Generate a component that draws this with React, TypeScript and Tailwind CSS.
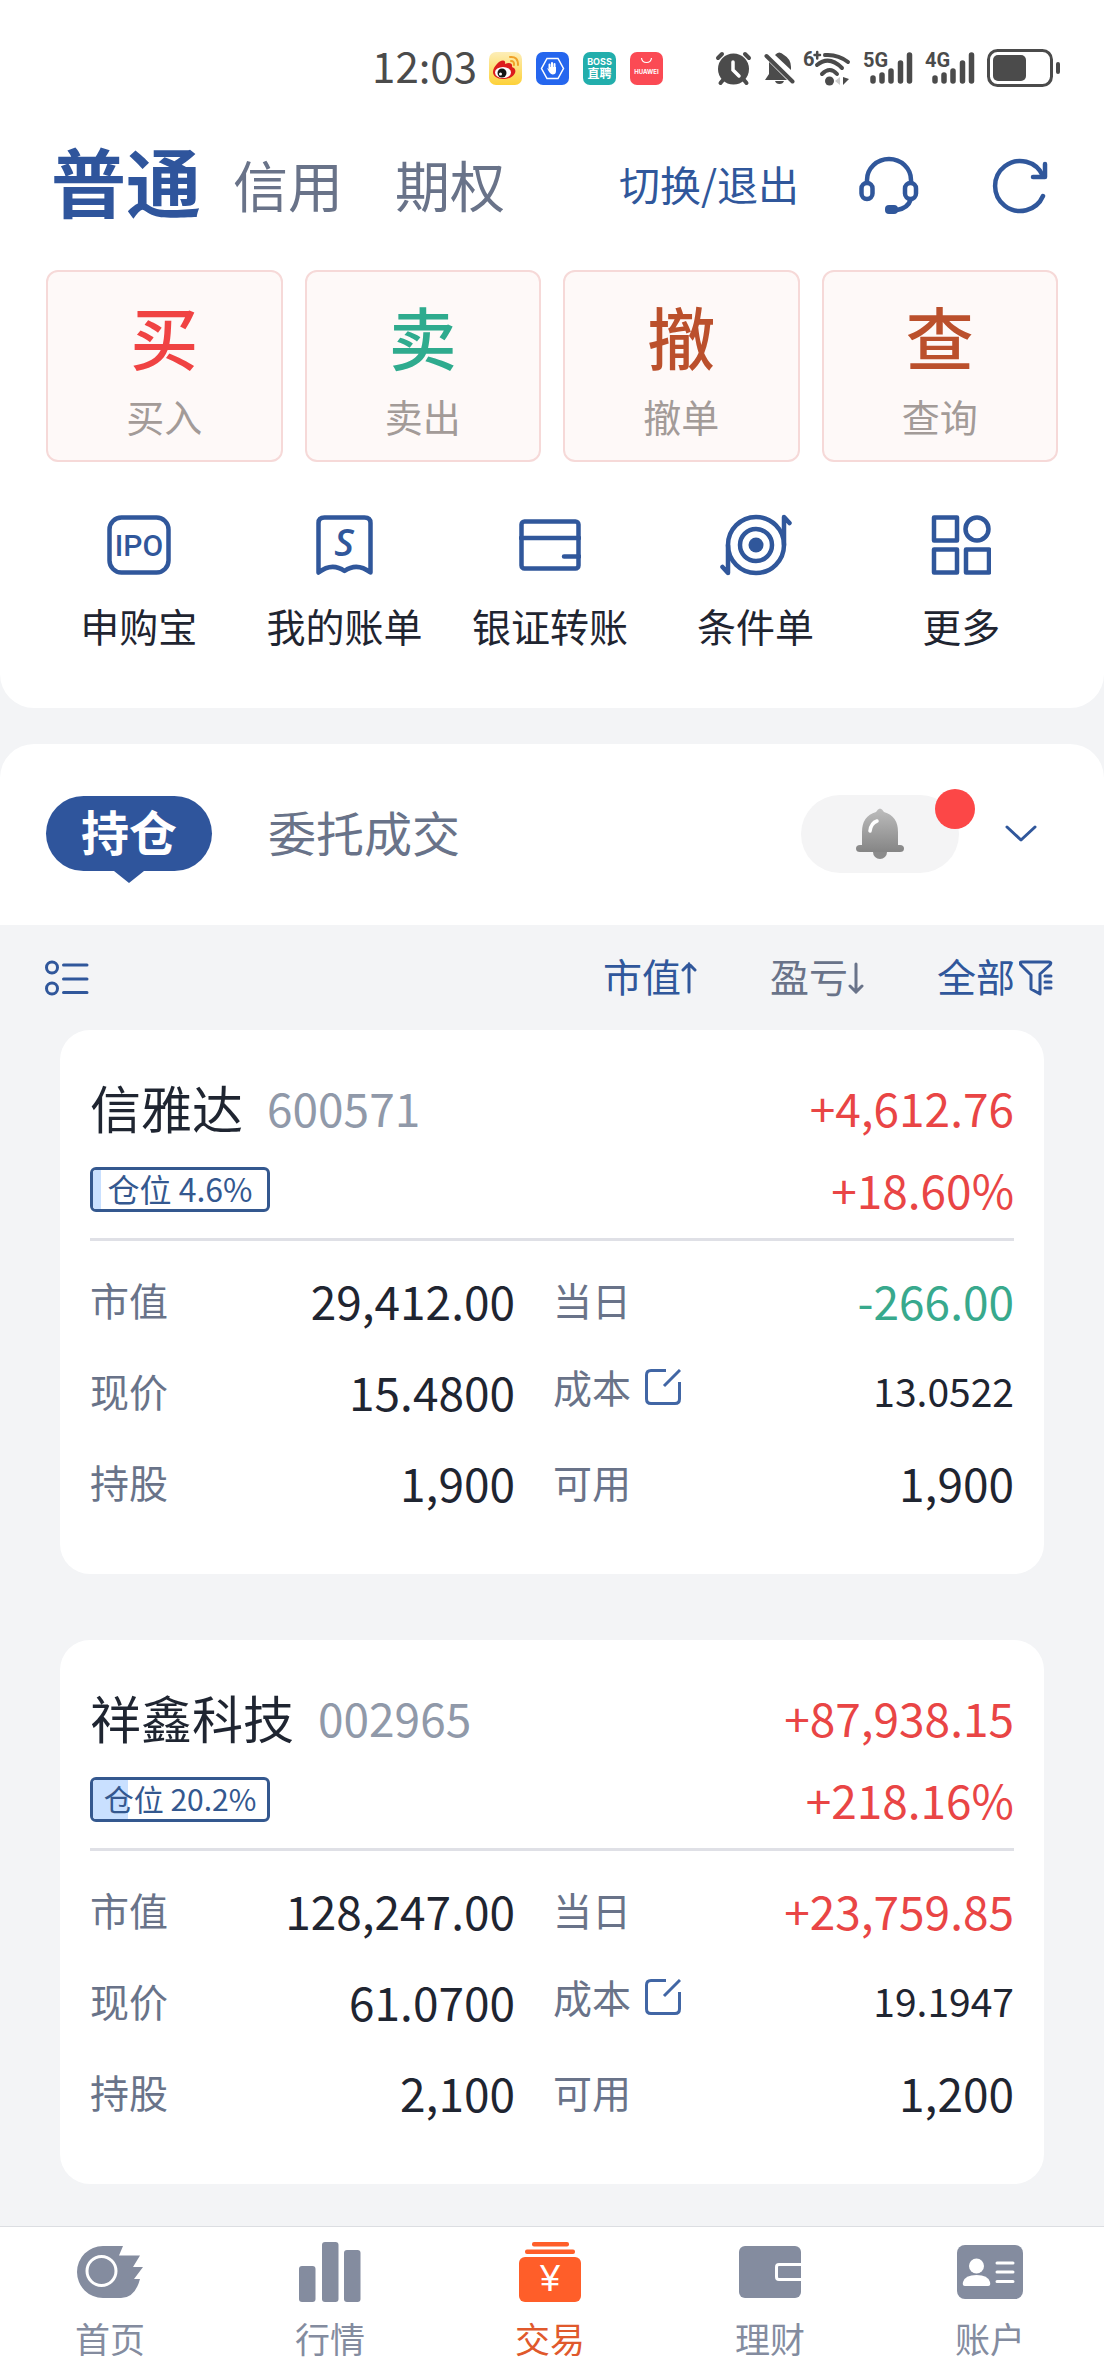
import { ReactNode } from "react";

type Tone = "up" | "down";

type Holding = {
  name: string;
  code: string;
  profit: string;
  rate: string;
  weight: number;
  value: string;
  today: string;
  todayTone: Tone;
  price: string;
  cost: string;
  shares: string;
  usable: string;
};

const holdings: Holding[] = [
  {
    name: "信雅达",
    code: "600571",
    profit: "+4,612.76",
    rate: "+18.60%",
    weight: 4.6,
    value: "29,412.00",
    today: "-266.00",
    todayTone: "down",
    price: "15.4800",
    cost: "13.0522",
    shares: "1,900",
    usable: "1,900",
  },
  {
    name: "祥鑫科技",
    code: "002965",
    profit: "+87,938.15",
    rate: "+218.16%",
    weight: 20.2,
    value: "128,247.00",
    today: "+23,759.85",
    todayTone: "up",
    price: "61.0700",
    cost: "19.1947",
    shares: "2,100",
    usable: "1,200",
  },
];

const trades = [
  { char: "买", label: "买入", color: "text-[#f04343]" },
  { char: "卖", label: "卖出", color: "text-[#2fab8e]" },
  { char: "撤", label: "撤单", color: "text-[#bb502c]" },
  { char: "查", label: "查询", color: "text-[#bb502c]" },
];

const IpoIcon = () => (
  <svg width="64" height="60" viewBox="0 0 64 60" fill="none" stroke="currentColor" strokeWidth="4.500">
    <rect x="2.500" y="2.500" width="59" height="55" rx="12" />
    <text x="32" y="41" textAnchor="middle" fontFamily="Roboto, sans-serif" fontSize="30" fontWeight="500" fill="currentColor" stroke="none">
      IPO
    </text>
  </svg>
);

const BillIcon = () => (
  <svg width="57" height="60" viewBox="0 0 57 60" fill="none" stroke="currentColor" strokeWidth="4.500" strokeLinejoin="round">
    <path d="M2.500 57.500V8Q2.500 2.500 8.500 2.500H48.500Q54.500 2.500 54.500 8V57.500Q41 47 28.500 56Q16 47 2.500 57.500Z" />
    <text x="28" y="41" textAnchor="middle" fontFamily="'Open Sans', sans-serif" fontStyle="italic" fontSize="38" fontWeight="600" fill="currentColor" stroke="none">
      S
    </text>
  </svg>
);

const TransferIcon = () => (
  <svg width="62" height="52" viewBox="0 0 62 52" fill="none" stroke="currentColor" strokeWidth="4.500" strokeLinecap="round">
    <rect x="2.500" y="2.500" width="57" height="47" rx="3" />
    <path d="M2 19H60M45 37.500H60" />
  </svg>
);

const ConditionIcon = () => (
  <svg width="72" height="62" viewBox="0 0 72 62" fill="none" stroke="currentColor" strokeWidth="4.500" strokeLinecap="round" strokeLinejoin="round">
    <circle cx="36" cy="31" r="28" />
    <circle cx="36" cy="31" r="16" />
    <circle cx="36" cy="31" r="7.500" fill="currentColor" stroke="none" />
    <path d="M64 31V3L69.500 9M8 31V59L2.500 53" />
  </svg>
);

const MoreIcon = () => (
  <svg width="60" height="60" viewBox="0 0 60 60" fill="none" stroke="currentColor" strokeWidth="4.500" strokeLinejoin="round">
    <rect x="3" y="2.500" width="23" height="23" />
    <circle cx="46" cy="14" r="11.500" />
    <rect x="3" y="34.500" width="23" height="23" />
    <rect x="35" y="34.500" width="23" height="23" />
  </svg>
);

const services = [
  { label: "申购宝", icon: <IpoIcon /> },
  { label: "我的账单", icon: <BillIcon /> },
  { label: "银证转账", icon: <TransferIcon /> },
  { label: "条件单", icon: <ConditionIcon /> },
  { label: "更多", icon: <MoreIcon /> },
];

const HomeIcon = () => (
  <svg width="66" height="52" viewBox="0 0 66 52">
    <path d="M26 0H46L42 9.500H63L56 21H66L57 33H63Q58 52 44 52H26A26 26 0 0 1 26 0Z" fill="currentColor" />
    <circle cx="24.500" cy="25" r="14.500" fill="none" stroke="#fff" strokeWidth="3" />
  </svg>
);

const MarketIcon = () => (
  <svg width="62" height="60" viewBox="0 0 62 60" fill="currentColor">
    <rect x="0" y="24" width="16.500" height="36" rx="3" />
    <rect x="23" y="0" width="16.500" height="60" rx="3" />
    <rect x="45" y="8" width="16.500" height="52" rx="3" />
  </svg>
);

const TradeIcon = () => (
  <svg width="62" height="60" viewBox="0 0 62 60" fill="#ff5e29">
    <rect x="13" y="0" width="37" height="4.500" rx="2" />
    <rect x="6" y="7.500" width="50" height="4.500" rx="2" />
    <rect x="0" y="15" width="62" height="45" rx="6" />
    <text x="31" y="49" textAnchor="middle" fontFamily="'Liberation Sans', sans-serif" fontSize="36" fill="#fff">
      ¥
    </text>
  </svg>
);

const WalletIcon = () => (
  <svg width="62" height="52" viewBox="0 0 62 52">
    <rect width="62" height="52" rx="6" fill="currentColor" />
    <path d="M62 18.500H40Q37.500 18.500 37.500 21V31Q37.500 33.500 40 33.500H62" fill="none" stroke="#fff" strokeWidth="3" />
  </svg>
);

const AccountIcon = () => (
  <svg width="66" height="54" viewBox="0 0 66 54">
    <rect width="66" height="54" rx="8" fill="currentColor" />
    <circle cx="19.500" cy="21" r="7.500" fill="#fff" />
    <path d="M6 37Q8 30 19.500 30T33 37Q34 41 31 41H8Q5 41 6 37Z" fill="#fff" />
    <path d="M40 18H56M40 27H56M40 36.500H56" stroke="#fff" strokeWidth="3" strokeLinecap="round" />
  </svg>
);

const tabs = [
  { label: "首页", icon: <HomeIcon /> },
  { label: "行情", icon: <MarketIcon /> },
  { label: "交易", icon: <TradeIcon />, active: true },
  { label: "理财", icon: <WalletIcon /> },
  { label: "账户", icon: <AccountIcon /> },
];

const Signal = ({ label }: { label: string }) => (
  <svg width="50" height="44" viewBox="0 -4 50 44" fill="currentColor">
    <text x="0" y="17" fontFamily="Roboto, sans-serif" fontSize="20" fontWeight="700">
      {label}
    </text>
    <path d="M10 28V31M19 25V31M28 21V31M37.500 13V31M46.500 5V31" stroke="currentColor" strokeWidth="5.500" strokeLinecap="round" />
  </svg>
);

const StatusBar = () => (
  <div className="flex h-[136px] items-center justify-end gap-3 pr-11 text-[#4b4b4b]">
    <span className="pb-[6px] text-[42px] leading-none">12:03</span>
    <div className="mr-10 flex gap-[14px]">
      <svg width="33" height="33" viewBox="0 0 33 33">
        <defs>
          <linearGradient id="weibo" x1="0" y1="0" x2="0" y2="1">
            <stop offset="0" stopColor="#fdeeb8" />
            <stop offset="1" stopColor="#fdd138" />
          </linearGradient>
        </defs>
        <rect width="33" height="33" rx="7" fill="url(#weibo)" />
        <path d="M4 20C4 15 10 8.500 14 8.500C17 8.500 16 12 16 12C20 10 24 11 23 15C26 16 27 18 26 21C24 26 18 27 14 27C8 27 4 24 4 20Z" fill="#dc1c1c" />
        <ellipse cx="14" cy="20.500" rx="8" ry="5.500" fill="#fff" />
        <circle cx="13" cy="21" r="4.500" fill="#161616" />
        <circle cx="11.500" cy="22" r="1.500" fill="#fff" />
        <path d="M21 5Q29 4 29 13M22 9Q25.500 9 25 13" fill="none" stroke="#f0a128" strokeWidth="2" strokeLinecap="round" />
      </svg>
      <svg width="33" height="33" viewBox="0 0 33 33">
        <rect width="33" height="33" rx="7" fill="#2566ee" />
        <path d="M11 6.500H22L27.500 16.500L22 26.500H11L5.500 16.500Z" fill="none" stroke="#fff" strokeWidth="1.500" />
        <path d="M13.500 17V12.500M16 16V11M18.500 17V12" stroke="#fff" strokeWidth="2" strokeLinecap="round" />
        <path d="M11 16L14 18V15H20V19Q20 22.500 16.500 22.500Q14 22.500 11 16Z" fill="#fff" />
      </svg>
      <svg width="33" height="33" viewBox="0 0 33 33" fill="#fff" textAnchor="middle" fontFamily="Inter, 'Noto Sans CJK SC', sans-serif" fontWeight="700">
        <rect width="33" height="33" rx="7" fill="#22aeac" />
        <text x="16.500" y="13" fontSize="9">
          BOSS
        </text>
        <text x="16.500" y="26" fontSize="12">
          直聘
        </text>
      </svg>
      <svg width="33" height="33" viewBox="0 0 33 33" fill="#fff" textAnchor="middle" fontFamily="Inter, sans-serif">
        <rect width="33" height="33" rx="7" fill="#fb4a54" />
        <path d="M11.500 6Q12 10.500 16.500 10.500T21.500 6" fill="none" stroke="#fff" strokeWidth="1.200" />
        <text x="16.500" y="21.500" fontSize="6" fontWeight="700">
          HUAWEI
        </text>
      </svg>
    </div>
    <svg width="37" height="36" viewBox="0 0 37 36" fill="none" stroke="currentColor" strokeWidth="4" strokeLinecap="round">
      <circle cx="18.500" cy="19" r="15.500" fill="currentColor" stroke="none" />
      <path d="M3 8L7 4M34 8L30 4M8 30L5.500 33M29 30L31.500 33" />
      <path d="M18 12V20L24 26" stroke="#fff" strokeWidth="3.500" />
    </svg>
    <svg className="-mr-1" width="31" height="36" viewBox="0 0 31 36" fill="currentColor">
      <path d="M1 30L5 24V12L23 30ZM11 5Q15 0 20 5Q27 9 27 17V20ZM11 31H20Q19 34 15.500 34T11 31Z" />
      <path d="M2.500 6L28.500 31.500" stroke="currentColor" strokeWidth="4" strokeLinecap="round" />
    </svg>
    <svg width="48" height="44" viewBox="0 -4 48 44" fill="none" stroke="currentColor" strokeWidth="4" strokeLinecap="round">
      <text x="0" y="16" fontFamily="Roboto, sans-serif" fontSize="20" fontWeight="700" fill="currentColor" stroke="none">
        6
      </text>
      <path d="M11.500 5H17M14.200 2V8.500" strokeWidth="2.500" />
      <path d="M22 5Q35 4 45 12M14 15Q26 5 39 18M19 24Q27 16 34 24" />
      <circle cx="26.500" cy="31" r="4.500" fill="currentColor" stroke="none" />
      <path d="M37 27V35L32 31Z" fill="#ccc" stroke="none" />
      <path d="M40 27V35L46 29Z" fill="currentColor" stroke="none" />
    </svg>
    <Signal label="5G" />
    <Signal label="4G" />
    <svg width="73" height="38" viewBox="0 0 73 38" fill="currentColor">
      <rect x="1.500" y="1.500" width="63" height="35" rx="9" fill="none" stroke="currentColor" strokeWidth="3" />
      <rect x="6" y="6" width="33" height="26" rx="5" />
      <rect x="69" y="13" width="4" height="12" rx="2" />
    </svg>
  </div>
);

const Header = () => (
  <header className="flex h-[100px] items-center pr-14 pl-[51px]">
    <button className="pb-[14px] text-[75px] leading-none font-bold text-[#2f559c]">普通</button>
    <button className="ml-8 pb-[6px] text-[55px] leading-none text-[#697389]">信用</button>
    <button className="ml-[52px] pb-[6px] text-[55px] leading-none text-[#697389]">期权</button>
    <div className="ml-auto flex items-center text-[#30579b]">
      <button className="pb-[6px] text-[41px] leading-none">切换/退出</button>
      <button aria-label="客服" className="ml-[60px]">
        <svg width="60" height="60" viewBox="0 0 60 60" fill="none" stroke="currentColor" strokeWidth="4.500" strokeLinecap="round">
          <path d="M8 26V24A22 21 0 0 1 52 24V26" />
          <rect x="2.500" y="27" width="11" height="16" rx="5.500" />
          <rect x="46" y="27" width="11" height="16" rx="5.500" />
          <path d="M51.500 44Q49 52 38 54" />
          <rect x="26" y="49" width="13" height="9" rx="4" fill="currentColor" stroke="none" />
        </svg>
      </button>
      <button aria-label="刷新" className="ml-[73px]">
        <svg width="56" height="56" viewBox="0 0 56 56" fill="none" stroke="currentColor" strokeWidth="4.500" strokeLinecap="round" strokeLinejoin="round">
          <path d="M51 38A25 25 0 1 1 51 18" />
          <path d="M53 6V19H41" />
        </svg>
      </button>
    </div>
  </header>
);

const Stat = ({ label, children, extra, className = "" }: { label: string; children: ReactNode; extra?: ReactNode; className?: string }) => (
  <div className={`flex h-[91px] items-center justify-between ${className}`}>
    <dt className="flex items-center gap-[14px] text-[39px] leading-none text-[#697389]">
      {label}
      {extra}
    </dt>
    <dd>{children}</dd>
  </div>
);

const HoldingCard = ({ item }: { item: Holding }) => (
  <article className="rounded-[30px] bg-white px-[30px] pt-9 pb-[47px] text-[46px] leading-none text-[#1f2531]">
    <div className="flex h-[82px] items-center justify-between">
      <h2 className="flex items-center gap-6 text-[51px] leading-none">
        {item.name}
        <span className="text-[46px] text-[#9099a9]">{item.code}</span>
      </h2>
      <span className="text-[#e94545]">{item.profit}</span>
    </div>
    <div className="flex h-[82px] items-center justify-between">
      <span className="relative flex h-[45px] w-[180px] items-center justify-center overflow-hidden rounded-md border-3 border-[#34588f] text-[#34588f]">
        <span className="absolute inset-y-0 left-0 bg-[#c9e0ff]" style={{ width: `${item.weight}%` }} />
        <span className={`relative pb-[2px] ${item.weight < 10 ? "text-[32px]" : "text-[30px]"}`}>仓位 {item.weight}%</span>
      </span>
      <span className="text-[#e94545]">{item.rate}</span>
    </div>
    <dl className="mt-2 grid grid-cols-[425fr_461fr] gap-x-[38px] border-t-3 border-[#dfe0e6] pt-[13px]">
      <Stat label="市值">{item.value}</Stat>
      <Stat label="当日">
        <span className={item.todayTone === "up" ? "text-[#e94545]" : "text-[#38a98d]"}>{item.today}</span>
      </Stat>
      <Stat label="现价">{item.price}</Stat>
      <Stat
        label="成本"
        className="pb-2"
        extra={
          <button aria-label="修改成本">
            <svg width="36" height="36" viewBox="0 0 36 36" fill="none" stroke="#4166a5" strokeWidth="3">
              <path d="M21 1.500H6Q1.500 1.500 1.500 6V30Q1.500 34.500 6 34.500H30Q34.500 34.500 34.500 30V13M35 1L19 17" />
            </svg>
          </button>
        }
      >
        <span className="text-[39px]">{item.cost}</span>
      </Stat>
      <Stat label="持股">{item.shares}</Stat>
      <Stat label="可用">{item.usable}</Stat>
    </dl>
  </article>
);

const BellIcon = () => (
  <svg width="48" height="52" viewBox="0 0 48 52">
    <defs>
      <linearGradient id="bell" x1="0" y1="0" x2="0" y2="1">
        <stop offset="0" stopColor="#bdbdbd" />
        <stop offset="1" stopColor="#858585" />
      </linearGradient>
    </defs>
    <circle cx="24" cy="44" r="7" fill="#8b8b8b" />
    <path d="M20 4Q24 -3 28 4Q42 8 42 24V37H44Q48 37 48 40.500T44 44H4Q0 44 0 40.500T4 37H6V24Q6 8 20 4Z" fill="url(#bell)" />
    <path d="M14 23Q15 15 21 13" fill="none" stroke="#fff" strokeWidth="3.500" strokeLinecap="round" />
  </svg>
);

const App = () => {
  return (
    <div className="flex min-h-screen flex-col bg-[#f3f4f6] font-['Noto_Sans_CJK_SC',sans-serif]">
      <section className="rounded-b-[34px] bg-white pb-[55px]">
        <StatusBar />
        <Header />
        <div className="mt-[34px] grid grid-cols-4 gap-[22px] px-[46px]">
          {trades.map((t) => (
            <button key={t.label} className="flex h-48 flex-col items-center rounded-xl border-2 border-[#f6d9d8] bg-[#fef9f8] pt-7">
              <span className={`text-[68px] leading-[72px] font-medium ${t.color}`}>{t.char}</span>
              <span className="mt-4 text-[38px] leading-[56px] text-[#a39b98]">{t.label}</span>
            </button>
          ))}
        </div>
        <div className="mt-[51px] grid grid-cols-5 pr-10 pl-9">
          {services.map((s) => (
            <button key={s.label} className="flex flex-col items-center text-[#30579b]">
              <span className="flex h-16 items-center">{s.icon}</span>
              <span className="mt-5 text-[39px] leading-[56px] whitespace-nowrap text-[#1f2531]">{s.label}</span>
            </button>
          ))}
        </div>
      </section>

      <section className="mt-9 flex h-[181px] items-center rounded-t-[34px] bg-white pr-[67px] pb-[2px] pl-[46px]">
        <button className="relative h-[75px] w-[166px] rounded-full bg-[#2f559c] pb-[7px] text-[48px] leading-none font-bold text-white">
          持仓
          <svg className="absolute top-full left-1/2 -translate-x-1/2" width="30" height="12" viewBox="0 0 30 12">
            <path d="M0 0H30L15 12Z" fill="#2f559c" />
          </svg>
        </button>
        <button className="ml-14 pb-[6px] text-[48px] leading-none text-[#697389]">委托成交</button>
        <button aria-label="消息" className="relative ml-auto flex h-[78px] w-[158px] items-center justify-center rounded-full bg-[#f4f4f5]">
          <BellIcon />
          <span className="absolute -top-[6px] -right-4 size-10 rounded-full bg-[#fc4747]" />
        </button>
        <button aria-label="展开" className="ml-[46px]">
          <svg width="32" height="18" viewBox="0 0 32 18" fill="none" stroke="#30579b" strokeWidth="3" strokeLinecap="round" strokeLinejoin="round">
            <path d="M2 2L16 15L30 2" />
          </svg>
        </button>
      </section>

      <div className="flex h-[105px] items-center pr-[51px] pl-[45px] text-[39px] leading-none text-[#30579b]">
        <button aria-label="列表">
          <svg width="44" height="36" viewBox="0 0 44 36" fill="none" stroke="currentColor" strokeWidth="3" strokeLinecap="round">
            <circle cx="7" cy="7.500" r="5.500" />
            <circle cx="7" cy="28.500" r="5.500" />
            <path d="M18.500 5H42M18.500 19H42M18.500 32.500H42" />
          </svg>
        </button>
        <button className="ml-auto flex items-center">
          <span className="pb-1">市值</span>
          <svg width="16" height="32" viewBox="0 0 16 32" fill="none" stroke="currentColor" strokeWidth="3" strokeLinecap="round">
            <path d="M8 30V2M2 8L8 2L14 8" />
          </svg>
        </button>
        <button className="ml-[73px] flex items-center text-[#697389]">
          <span className="pb-1">盈亏</span>
          <svg width="16" height="32" viewBox="0 0 16 32" fill="none" stroke="currentColor" strokeWidth="3" strokeLinecap="round">
            <path d="M8 2V30M2 24L8 30L14 24" />
          </svg>
        </button>
        <button className="ml-[73px] flex items-center gap-1">
          <span className="pb-1">全部</span>
          <svg width="34" height="36" viewBox="0 0 34 36" fill="none" stroke="currentColor" strokeWidth="3" strokeLinecap="round" strokeLinejoin="round">
            <path d="M3 2H30Q33 2 31 5L21 14V34L12 29V15L2 5Q0 2 3 2ZM26 16H32M26 22H32M26 28H32" />
          </svg>
        </button>
      </div>

      <main className="flex flex-col gap-[66px] px-[60px] pb-[42px]">
        {holdings.map((item) => (
          <HoldingCard key={item.code} item={item} />
        ))}
      </main>

      <nav className="mt-auto grid h-[150px] grid-cols-5 border-t border-[#dcdee2] bg-white pr-1">
        {tabs.map((tab) => (
          <a key={tab.label} href="#" className={`flex flex-col items-center pt-3 ${tab.active ? "text-[#e0592c]" : "text-[#848c9f]"}`}>
            <span className="flex h-[66px] items-center">{tab.icon}</span>
            <span className="mt-[9px] text-[35px] leading-[48px]">{tab.label}</span>
          </a>
        ))}
      </nav>
    </div>
  );
};

export default App;
